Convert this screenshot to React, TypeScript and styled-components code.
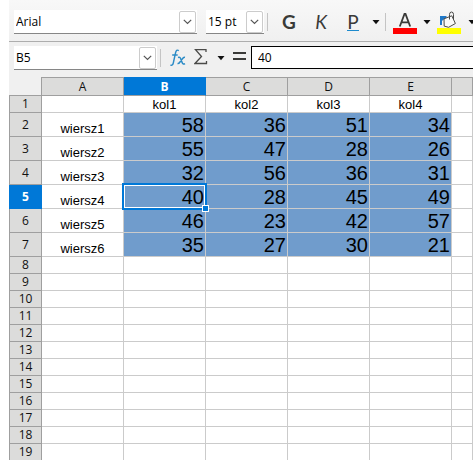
import React from "react";
import styled, { createGlobalStyle, css } from "styled-components";

const UI_FONT = '"Open Sans", "Noto Sans", sans-serif';
const TOOL_FONT = 'Lato, "Open Sans", sans-serif';
const CELL_FONT = '"Liberation Sans", Arial, sans-serif';
const BLUE = "#0078d7";

const GlobalStyle = createGlobalStyle`
  *, *::before, *::after { box-sizing: border-box; }
  body { margin: 0; background: #ffffff; overflow: hidden; }
`;

const Window = styled.main`
  height: 100vh;
  padding-left: 9px;
  overflow: hidden;
  background: #ffffff;
  color: #000000;
  font-family: ${UI_FONT};
  font-size: 12px;
`;

const Toolbar = styled.div`
  display: flex;
  align-items: flex-start;
  height: 42px;
  padding: 10px 0 0 5px;
  overflow: hidden;
  background: linear-gradient(#f8f8f8, #f0f0f0);
  border-bottom: 1px solid #adadad;
`;

const FormulaBar = styled.div`
  display: flex;
  align-items: flex-start;
  height: 35px;
  padding: 4px 0 0 5px;
  background: #f0f0f0;
`;

const ComboGroup = styled.div`
  display: flex;
  flex: none;
  gap: 9px;
`;

const Combo = styled.div<{ $width: number }>`
  display: flex;
  flex: none;
  width: ${(p) => p.$width}px;
  height: 24px;
  padding: 1px 1px 0 0;
  background: #ffffff;
  border-bottom: 1px solid #868686;
`;

const fieldStyle = css`
  appearance: none;
  flex: 1;
  min-width: 0;
  height: 22px;
  padding: 0 0 0 2px;
  border: 0;
  outline: 0;
  border-radius: 0;
  background: transparent;
  color: #000000;
  font: 12px/22px ${UI_FONT};
`;
const ComboSelect = styled.select`${fieldStyle}`;
const ComboInput = styled.input`${fieldStyle}`;

const chevronStyle = css`
  display: flex;
  flex: none;
  align-items: center;
  justify-content: center;
  width: 17px;
  height: 22px;
  padding: 0;
  background: #ffffff;
  border: 1px solid #cccccc;
  border-radius: 2px;
`;
const ChevronFace = styled.span`${chevronStyle} pointer-events: none;`;
const ChevronButton = styled.button`${chevronStyle}`;

const Separator = styled.span<{ $before: number; $after: number }>`
  flex: none;
  width: 1px;
  height: 18px;
  margin: 3px ${(p) => p.$after}px 0 ${(p) => p.$before}px;
  background: #c4c4c4;
`;

const ToolButton = styled.button<{ $width: number }>`
  display: flex;
  flex: none;
  align-items: center;
  justify-content: center;
  width: ${(p) => p.$width}px;
  height: 24px;
  padding: 0;
  border: 0;
  background: transparent;
  color: #3a3a38;
  font: 19px/24px ${TOOL_FONT};
`;
const BoldButton = styled(ToolButton)`font-weight: 700;`;
const ItalicButton = styled(ToolButton)`font-style: italic;`;

const Underlined = styled.span`
  height: 18px;
  line-height: 18px;
  border-bottom: 1px solid #1e8bcd;
`;

const FormulaInput = styled.input`
  flex: 1;
  min-width: 0;
  height: 23px;
  padding: 0 6px;
  border: 1px solid #000000;
  border-right: 0;
  border-radius: 0;
  outline: 0;
  background: #ffffff;
  color: #000000;
  font: 12px/20px ${UI_FONT};
`;

const Sheet = styled.table`
  width: 100%;
  table-layout: fixed;
  border-collapse: separate;
  border-spacing: 0;
`;
const HeadCol = styled.col`width: 33px;`;
const DataCol = styled.col`width: 82px;`;

const Corner = styled.td`
  height: 19px;
  padding: 0;
  background: #f0f0f0;
  border-right: 1px solid #9f9f9f;
  border-bottom: 1px solid #9f9f9f;
`;

const headStyle = css<{ $active?: boolean }>`
  padding: 0;
  overflow: hidden;
  background: ${(p) => (p.$active ? BLUE : "#dcdcdb")};
  color: ${(p) => (p.$active ? "#ffffff" : "#111111")};
  font-weight: ${(p) => (p.$active ? 700 : 400)};
  font-size: 12px;
  line-height: 16px;
  text-align: center;
  border: 0 solid #9f9f9f;
  border-right-width: 1px;
  border-bottom-width: 1px;
`;
const ColumnHead = styled.th<{ $active?: boolean }>`
  ${headStyle}
  height: 19px;
  border-top-width: 1px;
  ${(p) => p.$active && css`border-color: ${BLUE}; border-bottom-color: #9f9f9f;`}
`;
const RowHead = styled.th<{ $active?: boolean }>`
  ${headStyle}
  border-left-width: 1px;
  ${(p) => p.$active && css`border-color: ${BLUE};`}
`;

const Row = styled.tr<{ $tall: boolean }>`
  height: ${(p) => (p.$tall ? 24 : 17)}px;
`;

const Cell = styled.td`
  padding: 0;
  border: 0 solid #cbcbcb;
  border-right-width: 1px;
  border-bottom-width: 1px;
  font-family: ${CELL_FONT};
  font-size: 13px;
  line-height: 15px;
  text-align: center;
  vertical-align: bottom;
  white-space: nowrap;
`;

const NumberCell = styled(Cell)`
  position: relative;
  padding-right: 1px;
  background: #709ccc;
  font-size: 20px;
  line-height: 22px;
  text-align: right;
`;

const Cursor = styled.span`
  position: absolute;
  z-index: 1;
  inset: -2px;
  border: 2px solid ${BLUE};
  box-shadow: inset 0 0 0 1px #ffffff;
  pointer-events: none;
  &::after {
    content: "";
    position: absolute;
    right: -4px;
    bottom: -4px;
    width: 7px;
    height: 7px;
    background: ${BLUE};
    border: 1px solid #ffffff;
  }
`;

const Chevron = () => (
  <svg width="9" height="6" viewBox="0 0 9 6" fill="none" stroke="#555" strokeWidth="1.2" aria-hidden="true">
    <path d="M.8.8 4.5 4.5 8.2.8" />
  </svg>
);

const Arrow = () => (
  <svg width="8" height="5" viewBox="0 0 8 5" aria-hidden="true">
    <path d="M.5 0h7L4 4.200z" fill="#111" />
  </svg>
);

const FontColorIcon = () => (
  <svg width="24" height="24" viewBox="0 0 24 24" aria-hidden="true">
    <path d="M6.800 16.500 11.500 4h1L17.200 16.500M8.600 12.300h6.800" fill="none" stroke="#3a3a38" strokeWidth="1.800" />
    <path d="M0 18h24v6H0z" fill="#ff0000" />
  </svg>
);

const FillColorIcon = () => (
  <svg width="24" height="24" viewBox="0 0 24 24" aria-hidden="true">
    <path d="M0 18h24v6H0z" fill="#ffff00" />
    <path d="M3 15V6h6.500v2.500L6.500 9.500 5 11v4z" fill="#1e78c8" />
    <path d="m7 8.800 7.800-3 3.600 7.700-6.800 3.800-4.400-1.200z" fill="#fafafa" stroke="#4a4a48" strokeWidth="1" strokeLinejoin="round" />
    <path d="M12.500 9.500V4.500q0-2.500 2-2.500t2 2.500V9" fill="none" stroke="#4a4a48" strokeWidth="1" />
  </svg>
);

const FunctionIcon = () => (
  <svg width="17" height="20" viewBox="0 0 17 20" fill="none" stroke="#2b8bc6" aria-hidden="true">
    <path d="M8.800 2.600Q6.300 1 5.500 5L3.300 15Q2.600 18 .5 17M2.200 7h5.500" strokeWidth="1.400" />
    <path d="M8 9.500q2-.8 2.700 1.300l1.500 4q.8 2 2.800.8M15 9.300q-1.500-.3-3 2l-2 2.700q-1.200 1.800-2.500 1.500" strokeWidth="1.500" />
  </svg>
);

const SumIcon = () => (
  <svg width="14" height="20" viewBox="0 0 14 20" aria-hidden="true">
    <path d="M12 4V1.700H1.500L7.500 8.500l-6.500 7h11.500V13" fill="none" stroke="#4a4a48" strokeWidth="1.300" />
  </svg>
);

const EqualsIcon = () => (
  <svg width="13" height="12" viewBox="0 0 13 12" aria-hidden="true">
    <path d="M0 0h13v2H0zM0 6h13v2H0z" fill="#3a3a38" />
  </svg>
);

const COLUMNS = ["A", "B", "C", "D", "E", "F"];
const LABELS = ["kol1", "kol2", "kol3", "kol4"];
const DATA = [
  [58, 36, 51, 34],
  [55, 47, 28, 26],
  [32, 56, 36, 31],
  [40, 28, 45, 49],
  [46, 23, 42, 57],
  [35, 27, 30, 21],
];
const ROWS = Array.from({ length: 19 }, (_, i) => i + 1);

function SheetRow({ row }: { row: number }) {
  const values = DATA[row - 2];
  return (
    <Row $tall={Boolean(values)}>
      <RowHead scope="row" $active={row === 5}>{row}</RowHead>
      <Cell>{values ? `wiersz${row - 1}` : ""}</Cell>
      {LABELS.map((label, i) =>
        values ? (
          <NumberCell key={label}>
            {values[i]}
            {row === 5 && i === 0 && <Cursor />}
          </NumberCell>
        ) : (
          <Cell key={label}>{row === 1 ? label : ""}</Cell>
        )
      )}
      <Cell />
    </Row>
  );
}

export default function App() {
  return (
    <Window>
      <GlobalStyle />
      <Toolbar role="toolbar" aria-label="Formatowanie">
        <ComboGroup>
          <Combo $width={183}>
            <ComboSelect aria-label="Nazwa czcionki"><option>Arial</option></ComboSelect>
            <ChevronFace><Chevron /></ChevronFace>
          </Combo>
          <Combo $width={58}>
            <ComboSelect aria-label="Rozmiar czcionki"><option>15 pt</option></ComboSelect>
            <ChevronFace><Chevron /></ChevronFace>
          </Combo>
        </ComboGroup>
        <Separator $before={3} $after={5} />
        <BoldButton $width={32} aria-label="Pogrubienie">G</BoldButton>
        <ItalicButton $width={32} aria-label="Kursywa">K</ItalicButton>
        <ToolButton $width={32} aria-label="Podkreślenie"><Underlined>P</Underlined></ToolButton>
        <ToolButton $width={14} aria-label="Style podkreślenia"><Arrow /></ToolButton>
        <Separator $before={2} $after={7} />
        <ToolButton $width={24} aria-label="Kolor czcionki"><FontColorIcon /></ToolButton>
        <ToolButton $width={20} aria-label="Wybierz kolor czcionki"><Arrow /></ToolButton>
        <ToolButton $width={24} aria-label="Kolor tła"><FillColorIcon /></ToolButton>
        <ToolButton $width={22} aria-label="Wybierz kolor tła"><Arrow /></ToolButton>
      </Toolbar>
      <FormulaBar>
        <Combo $width={143}>
          <ComboInput aria-label="Pole nazwy" defaultValue="B5" />
          <ChevronButton aria-label="Zakresy"><Chevron /></ChevronButton>
        </Combo>
        <Separator $before={3} $after={9} />
        <ToolButton $width={17} aria-label="Kreator funkcji"><FunctionIcon /></ToolButton>
        <ToolButton $width={28} aria-label="Suma"><SumIcon /></ToolButton>
        <ToolButton $width={12} aria-label="Wybierz funkcję"><Arrow /></ToolButton>
        <ToolButton $width={24} aria-label="Formuła"><EqualsIcon /></ToolButton>
        <FormulaInput aria-label="Wiersz wprowadzania" defaultValue="40" />
      </FormulaBar>
      <Sheet>
        <colgroup>
          <HeadCol />
          {LABELS.map((l) => <DataCol key={l} />)}
          <DataCol />
          <col />
        </colgroup>
        <thead>
          <tr>
            <Corner />
            {COLUMNS.map((c) => (
              <ColumnHead key={c} scope="col" $active={c === "B"}>{c === "F" ? "" : c}</ColumnHead>
            ))}
          </tr>
        </thead>
        <tbody>
          {ROWS.map((row) => <SheetRow key={row} row={row} />)}
        </tbody>
      </Sheet>
    </Window>
  );
}
